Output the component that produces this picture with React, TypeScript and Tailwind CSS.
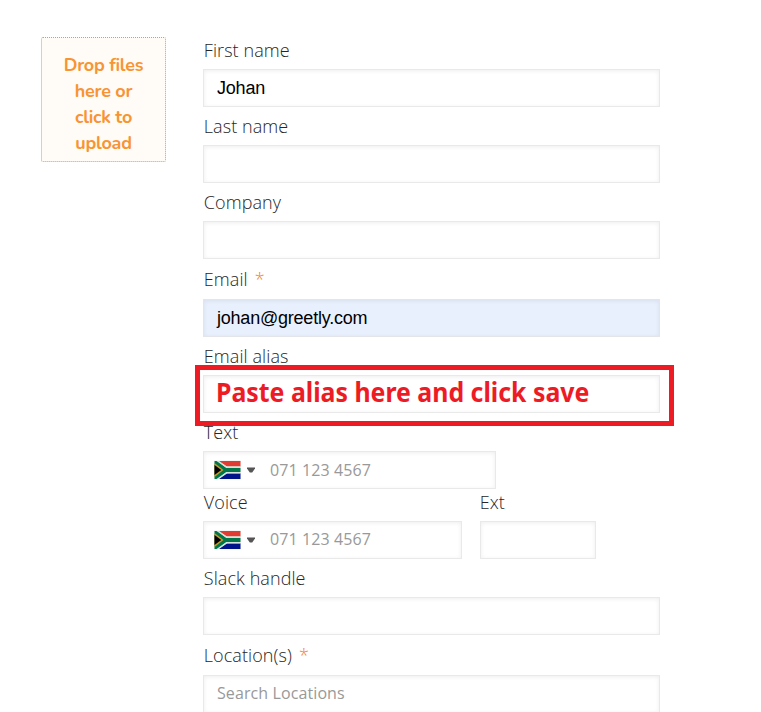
import React from "react";

const inputBox =
  "h-[38px] border border-[#e9e9e9] bg-white shadow-[inset_0_1px_4px_rgba(0,0,0,0.07)] flex items-center";

function Label({ text, required = false, className = "h-[38px]" }: { text: string; required?: boolean; className?: string }) {
  return (
    <div className={`flex items-center pl-[0.8px] text-[18px] leading-[24px] font-light text-[#262626] whitespace-pre ${className}`}>
      <span className="tracking-[0.08px]">{text}</span>
      {required && <span className="ml-[7px] text-[#f57f17]">*</span>}
    </div>
  );
}

function Flag() {
  return (
    <svg className="ml-[10px] h-[20px] w-[28px] shrink-0" viewBox="-0.5 -1 28 20">
      <rect x="-0.5" y="-0.5" width="27" height="19" fill="#ededed" />
      <rect width="26" height="18" fill="#fff" />
      <path d="M0 0H26V5.5H12L4 0Z" fill="#e03c31" />
      <path d="M4 18L12 12.2H26V18Z" fill="#001489" />
      <path d="M0 0H3L12 7H26V11H12L3 18H0Z" fill="#007749" />
      <path d="M2 0H4.5L12.5 5.5H26V7H12L2 0ZM2 18H4.5L12.5 12.5H26V11H12Z" fill="#d5e3dc" />
      <path d="M0 2L9 9L0 16Z" fill="#c99a2c" />
      <path d="M0 4L6.8 9L0 14Z" fill="#000" />
    </svg>
  );
}

function Phone({ className, textClass }: { className: string; textClass: string }) {
  return (
    <div className={`${inputBox} ${className}`}>
      <Flag />
      <svg className="ml-[5px] h-[6px] w-[8px] shrink-0" viewBox="0 0 8 6">
        <path d="M0 0.5H8V1.5L5.2 5.5H2.8L0 1.5Z" fill="#555" />
      </svg>
      <span className={`ml-[15px] text-[16px] tracking-[0.1px] text-[#999] ${textClass}`}>071 123 4567</span>
    </div>
  );
}

export default function App() {
  return (
    <div className="flex h-[712px] w-[761px] items-start overflow-hidden bg-white pt-[31px] pl-[41px] font-['Open_Sans',sans-serif]">
      <div className="mt-[6px] h-[125px] w-[125px] shrink-0 rounded-[2px] border border-dotted border-[#f79433] bg-[#fffbf6] pt-[14px] text-center font-['Nunito','Lato',sans-serif] text-[18px] leading-[26px] font-bold tracking-[-0.25px] text-[#f79433]">
        Drop files
        <br />
        here or
        <br />
        click to
        <br />
        upload
      </div>
      <div className="ml-[37px] w-[457px] shrink-0">
        <Label text="First name" />
        <div className={`${inputBox} pl-[13px] font-['Liberation_Sans',Arial,sans-serif] text-[18px] tracking-[-0.2px] text-black`}>Johan</div>
        <Label text="Last name" />
        <div className={inputBox} />
        <Label text="Company" />
        <div className={inputBox} />
        <Label text="Email" required className="h-[40px]" />
        <div className="flex h-[38px] items-center border border-[#e3e5eb] bg-[#e8f0fe] pl-[13px] font-['Liberation_Sans',Arial,sans-serif] text-[18px] tracking-[-0.22px] text-black shadow-[inset_0_1px_4px_rgba(0,0,0,0.07)]">
          johan@greetly.com
        </div>
        <Label text="Email alias" />
        <div className="relative">
          <div className={inputBox} />
          <div className="absolute -top-[10px] -left-[8px] flex h-[61px] w-[479px] items-center border-[5px] border-[#ed1c24] pl-[16px]">
            <span className="origin-left -translate-y-[4px] scale-x-[0.956] font-['Noto_Sans',sans-serif] text-[26px] leading-[36px] font-bold whitespace-nowrap text-[#ed1c24]">
              Paste alias here and click save
            </span>
          </div>
        </div>
        <Label text="Text" />
        <Phone className="w-[293px]" textClass="" />
        <div className="flex gap-[18px]">
          <div className="w-[259px]">
            <Label text="Voice" className="h-[32px] pb-[6px]" />
            <Phone className="w-full" textClass="-translate-y-px" />
          </div>
          <div className="w-[116px]">
            <Label text="Ext" className="-ml-px h-[32px] pb-[6px]" />
            <div className={inputBox} />
          </div>
        </div>
        <Label text="Slack handle" />
        <div className={inputBox} />
        <Label text="Location(s)" required className="h-[40px]" />
        <div className={`${inputBox} pl-[13px] text-[16px] tracking-[0.1px] text-[#999]`}>
          <span className="-translate-y-px">Search Locations</span>
        </div>
      </div>
    </div>
  );
}
